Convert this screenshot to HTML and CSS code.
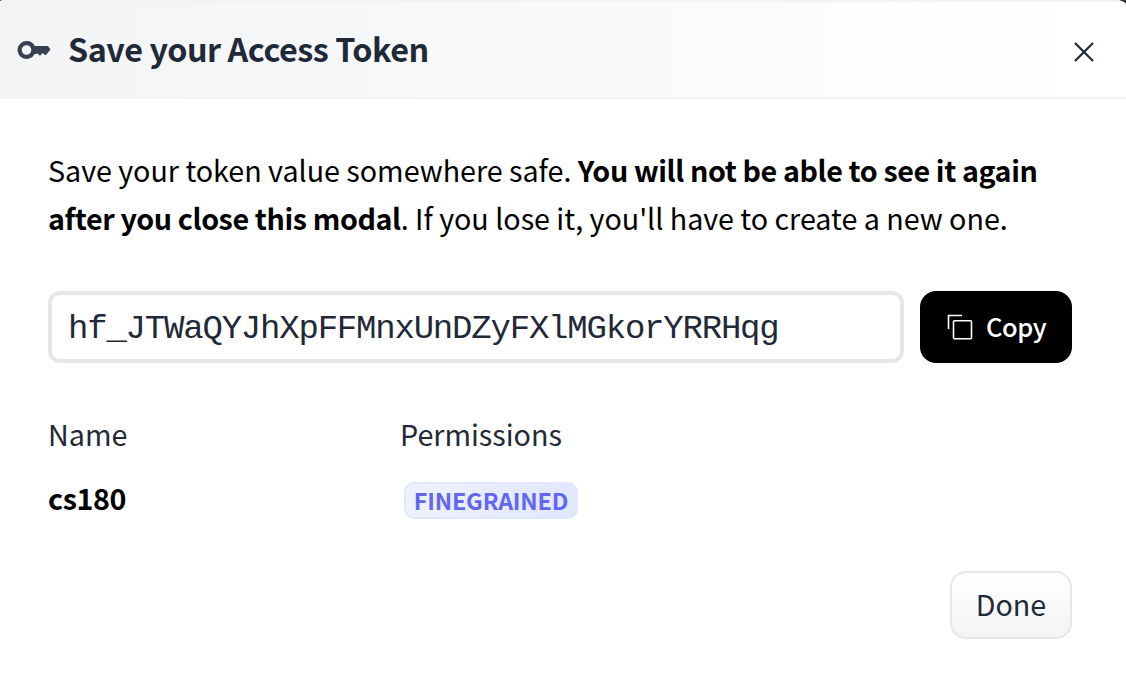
FILE: index.html
```html
<!DOCTYPE html>
<html lang="en">
<head>
<meta charset="utf-8">
<title>Save your Access Token</title>
<link rel="stylesheet" href="styles.css">
</head>
<body>
<main class="modal">
  <header class="modal-header">
    <svg class="key-icon" width="34" height="20" viewBox="0 0 34 20"><path fill="currentColor" fill-rule="evenodd" d="M9.500 1a9 9 0 0 1 8.300 5H31l2.500 3.600L29 15l-1.500-.3L25.700 13 23 15.700 20.500 13.500 17.500 14.200A9 9 0 1 1 9.500 1Zm0 4.200a4.800 4.800 0 1 0 0 9.600 4.800 4.800 0 0 0 0-9.600Z"/></svg>
    <h1 class="modal-title">Save your Access Token</h1>
    <button class="close-button" aria-label="Close"><svg width="22" height="22" viewBox="0 0 22 22"><path d="M2 2l18 18M20 2L2 20" stroke="currentColor" stroke-width="2.200"/></svg></button>
  </header>
  <section class="modal-body">
    <p class="message">Save your token value somewhere safe. <strong>You will not be able to see it again</strong><br><strong>after you close this modal</strong>. If you lose it, you'll have to create a new one.</p>
    <div class="token-row">
      <div class="token-field">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</div>
      <button class="copy-button"><svg width="28" height="28" viewBox="0 0 28 28" fill="none" stroke="currentColor" stroke-width="1.600"><path d="M2.500 16V2.500H16"/><rect x="7.500" y="7.700" width="18" height="18" rx="1"/></svg><span class="copy-label">Copy</span></button>
    </div>
    <div class="details">
      <div class="detail"><span class="label">Name</span><strong class="value">cs180</strong></div>
      <div class="detail"><span class="label">Permissions</span><span class="badge">FINEGRAINED</span></div>
    </div>
    <footer class="modal-footer"><button class="done-button">Done</button></footer>
  </section>
</main>
</body>
</html>
```
FILE: styles.css
```css
* { box-sizing: border-box; }
body {
  margin: 0;
  background: #303030;
  font-family: "Noto Sans CJK SC", "Noto Sans", sans-serif;
  font-size: 28.7px;
  color: #1f2937;
}
button { font: inherit; color: inherit; border: 0; padding: 0; background: none; }
.modal { height: 674px; background: #fff; border-radius: 4px 11px 0 0 / 2px 5px 0 0; overflow: hidden; white-space: nowrap; }
.modal-header {
  display: flex;
  align-items: center;
  height: 99px;
  padding: 0 31px 0 17px;
  border-top: 2px solid #f2f3f5;
  border-bottom: 2px solid #f2f3f5;
  background: linear-gradient(to right, #f3f4f6, #fff);
}
.key-icon { color: #374151; }
.modal-title { margin: 0 0 4px 17px; font-size: 32.300px; line-height: 48px; font-weight: 600; letter-spacing: -0.460px; }
.close-button { display: flex; margin: 4px 0 0 auto; }
.modal-body { padding: 47px 54px 0 48px; }
.message { margin: 0; line-height: 48px; color: #000; letter-spacing: -0.020px; }
.message strong { font-weight: 600; letter-spacing: -0.400px; }
.token-row { display: flex; gap: 16px; margin-top: 49px; }
.token-field {
  flex: 1;
  height: 72px;
  padding: 0 17px 0 16px;
  border: 4px solid #e5e7eb;
  border-radius: 12px;
  font: 34px/69px "Liberation Mono", monospace;
  letter-spacing: -1.200px;
}
.copy-button {
  display: flex;
  align-items: center;
  gap: 12px;
  width: 152px;
  height: 72px;
  padding-left: 26px;
  border-radius: 16px;
  background: #000;
  color: #fff;
  font-size: 25.500px;
  font-weight: 500;
}
.copy-label { margin-bottom: 3px; letter-spacing: -0.400px; }
.details { display: grid; grid-template-columns: 352px 1fr; margin-top: 47px; }
.detail { display: flex; flex-direction: column; align-items: flex-start; gap: 16px; }
.label, .value { line-height: 48px; }
.value { font-weight: 600; color: #000; letter-spacing: -0.400px; }
.badge {
  margin: 8px 0 0 4px;
  width: 174px;
  height: 37px;
  border: 2px solid #e0e7ff;
  border-radius: 10px;
  background: linear-gradient(to right, #eef2ff, #e0e7ff);
  color: #6366f1;
  font-size: 23.300px;
  font-weight: 600;
  letter-spacing: -0.200px;
  line-height: 32px;
  text-align: center;
}
.modal-footer { display: flex; justify-content: flex-end; margin-top: 49px; }
.done-button {
  width: 122px;
  height: 68px;
  padding-bottom: 4px;
  border: 2px solid #e5e7eb;
  border-radius: 16px;
  background: linear-gradient(to bottom, #fff, #f3f4f6);
}
```
